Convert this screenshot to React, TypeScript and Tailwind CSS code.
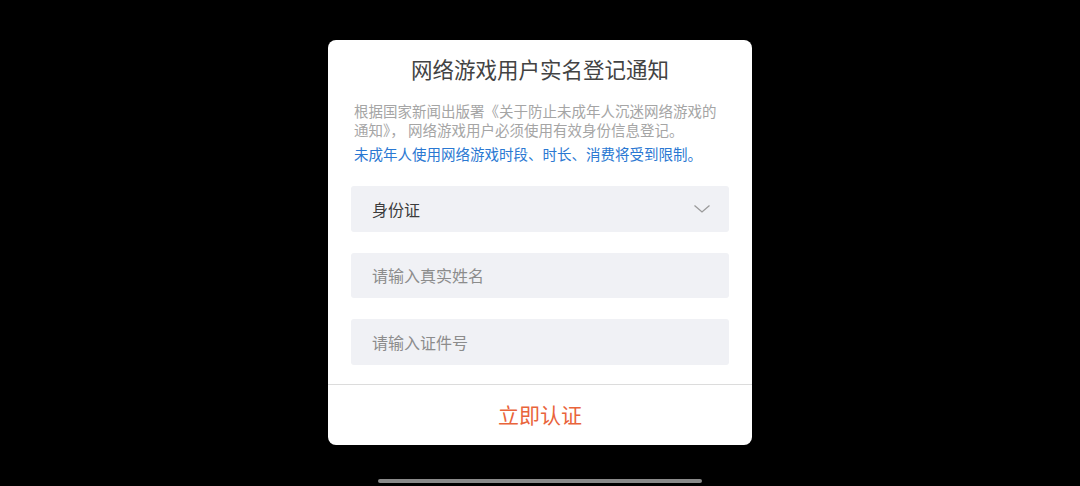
export default function App() {
  return (
    <div
      className="flex h-[486px] w-[1080px] flex-col items-center bg-black"
      style={{ fontFamily: '"Noto Sans CJK SC", "Noto Sans", sans-serif' }}
    >
      <div className="mt-[40px] flex w-[424px] flex-col rounded-[8px] bg-white">
        <h1 className="pt-[14px] text-center text-[21.5px] leading-[30px] text-[#434343]">
          网络游戏用户实名登记通知
        </h1>

        <div className="mt-[17px] px-[26px] text-[14.5px] leading-[19px]">
          <p className="text-[#a5a5a5]">
            根据国家新闻出版署《关于防止未成年人沉迷网络游戏的通知》， 网络游戏用户必须使用有效身份信息登记。
          </p>
          <p className="mt-[5px] text-[#2a78d2]">未成年人使用网络游戏时段、时长、消费将受到限制。</p>
        </div>

        <div className="mt-[23px] flex flex-col gap-[21px] px-[23px]">
          <div className="flex h-[45.5px] items-center justify-between rounded-[3px] bg-[#f0f1f5] pl-[21px] pr-[19px]">
            <span className="text-[16px] text-[#3c3c3c]">身份证</span>
            <svg width="16" height="8" viewBox="0 0 16 8" fill="none">
              <path d="M0.5 0.5 L8 7 L15.5 0.5" stroke="#9a9a9a" strokeWidth="1.3" />
            </svg>
          </div>
          <div className="flex h-[45.5px] items-center rounded-[3px] bg-[#f0f1f5] pl-[21px]">
            <span className="text-[16px] text-[#8c8c8c]">请输入真实姓名</span>
          </div>
          <div className="flex h-[45.5px] items-center rounded-[3px] bg-[#f0f1f5] pl-[21px]">
            <span className="text-[16px] text-[#8c8c8c]">请输入证件号</span>
          </div>
        </div>

        <div className="mt-[19.5px] border-t border-[#dcdcdc]" />
        <button className="flex h-[59.5px] items-center justify-center text-[21px] text-[#e9643b]">
          立即认证
        </button>
      </div>

      <div className="mb-[3px] mt-auto h-[4px] w-[324px] rounded-full bg-[#8a8a8a]" />
    </div>
  );
}
